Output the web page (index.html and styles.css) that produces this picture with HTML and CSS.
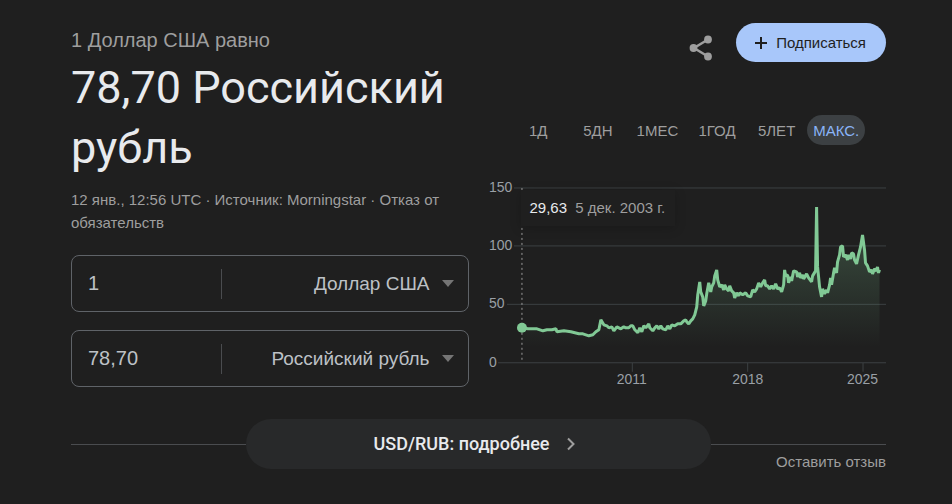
FILE: index.html
```
<!DOCTYPE html>
<html lang="ru">
<head>
  <meta charset="UTF-8" />
  <meta name="viewport" content="width=device-width,initial-scale=1" />
  <title>Курс доллара к рублю</title>
  <link rel="stylesheet" href="styles.css">
</head>
<body>
  <main class="container">
    <div class="columns">
      <section class="converter">
        <p class="from-label">1 Доллар США равно</p>
        <h1>78,70 Российский рубль</h1>
        <p class="meta">12 янв., 12:56 UTC · Источник: Morningstar · <a href="#">Отказ от обязательств</a></p>

        <div class="field">
          <input type="text" value="1" aria-label="Сумма в исходной валюте" />
          <select aria-label="Исходная валюта">
            <option>Доллар США</option>
            <option>Евро</option>
            <option>Российский рубль</option>
          </select>
          <svg class="arrow" width="12" height="7" viewBox="0 0 12 7"><path d="M0 0h12L6 7z" /></svg>
        </div>
        <div class="field">
          <input type="text" value="78,70" aria-label="Сумма в целевой валюте" />
          <select aria-label="Целевая валюта">
            <option>Российский рубль</option>
            <option>Доллар США</option>
            <option>Евро</option>
          </select>
          <svg class="arrow" width="12" height="7" viewBox="0 0 12 7"><path d="M0 0h12L6 7z" /></svg>
        </div>
      </section>

      <section class="history">
        <div class="actions">
          <button class="share-btn" aria-label="Поделиться">
            <svg width="24" height="26" viewBox="0 0 24 26">
              <path d="M19 4.500L5 13l14 8.500" fill="none" stroke="currentColor" stroke-width="2.500" />
              <circle cx="19" cy="4.500" r="3.900" />
              <circle cx="4.500" cy="13" r="3.900" />
              <circle cx="19" cy="21.500" r="3.900" />
            </svg>
          </button>
          <button class="follow-btn">
            <svg width="12" height="12" viewBox="0 0 12 12"><path d="M6 0v12M0 6h12" fill="none" stroke="currentColor" stroke-width="2" /></svg>
            Подписаться
          </button>
        </div>

        <div class="tabs">
          <button>1Д</button>
          <button>5ДН</button>
          <button>1МЕС</button>
          <button>1ГОД</button>
          <button>5ЛЕТ</button>
          <button class="active">МАКС.</button>
        </div>

        <div class="chart">
          <svg viewBox="0 0 398 210" role="img" aria-label="График курса USD/RUB">
            <defs>
              <linearGradient id="fade" x1="0" y1="0" x2="0" y2="1">
                <stop offset="0" stop-color="#81c995" stop-opacity="0.3" />
                <stop offset="0.900" stop-color="#81c995" stop-opacity="0" />
              </linearGradient>
            </defs>
            <g class="grid">
              <path d="M25 8H398M25 66H398M18 124.500H398M9 183H398" />
              <path d="M143.500 183v9M259 183v9M374.500 183v9" />
            </g>
            <g class="labels">
              <text x="0" y="12">150</text>
              <text x="0" y="70">100</text>
              <text x="0" y="128">50</text>
              <text x="0" y="187">0</text>
              <text x="143" y="204" text-anchor="middle">2011</text>
              <text x="259" y="204" text-anchor="middle">2018</text>
              <text x="374" y="204" text-anchor="middle">2025</text>
            </g>
            <path id="area" fill="url(#fade)" />
            <polyline id="line" class="line" points="33,148 39,149 48,149 54,151 58,150 63,150 67,149 68,152 75,151 82,152 90,154 94,154 100,156 104,155 107,152 110,150 112,140 115,145 118,146 120,148 123,147 125,151 128,147 132,149 135,147 137,148 140,148 142,146 144,146 146,150 149,153 151,148 153,152 155,146 157,148 160,144 161,148 164,151 166,148 168,146 170,149 172,146 174,149 177,150 179,146 181,149 183,145 186,146 189,144 192,144 195,141 197,140 198,142 200,144 202,141 204,139 206,135 208,127 209,115 211,102 212,112 214,117 215,126 217,121 218,114 220,103 222,112 223,107 225,103 226,96 228,90 229,100 231,107 233,105 235,110 236,105 238,109 240,111 241,106 243,111 245,113 246,118 248,113 250,116 251,113 254,115 257,113 259,116 262,117 264,110 266,112 268,109 270,103 272,107 274,103 276,100 277,106 279,106 281,109 283,106 285,109 287,104 289,109 291,108 293,112 295,105 296,90 297,96 299,95 300,103 302,97 303,101 305,91 308,92 309,97 311,93 312,98 314,95 315,99 318,94 320,98 323,102 324,96 327,91 328,27 329,87 331,107 333,117 334,109 336,114 338,110 339,113 341,105 342,98 343,105 345,93 346,88 348,93 349,82 351,75 352,67 354,66 355,77 357,75 359,80 360,75 362,79 363,73 365,74 366,80 368,84 370,75 372,67 374,55 376,70 377,83 379,86 381,92 383,90 384,94 386,89 388,91 389,87 390,93 391,90" />
            <path class="cursor" d="M33 8v172" />
            <circle class="dot" cx="33" cy="148" r="5" />
          </svg>
          <div class="tooltip"><b>29,63</b> 5 дек. 2003 г.</div>
        </div>
      </section>
    </div>

    <footer>
      <div class="rule"></div>
      <a class="more" href="#">
        USD/RUB: подробнее
        <svg width="8" height="14" viewBox="0 0 8 14"><path d="M1 1.500L6.500 7 1 12.500" fill="none" stroke="currentColor" stroke-width="2" /></svg>
      </a>
      <div class="rule"><a href="#">Оставить отзыв</a></div>
    </footer>
  </main>

  <script>
    // close the line down to the zero axis for the shaded area
    const points = document.getElementById("line").getAttribute("points");
    document.getElementById("area").setAttribute("d", `M33,183 L${points} L391,183 Z`);
  </script>
</body>
</html>
```
FILE: styles.css
```
body {
  margin: 0;
  font-family: "Liberation Sans", Arial, sans-serif;
  font-size: 15px;
  background: #1f1f1f;
  color: #9e9e9e;
}
button, input, select {
  font: inherit;
  color: inherit;
  border: none;
  background: none;
  padding: 0;
}
button, select {
  cursor: pointer;
}
a {
  color: inherit;
  text-decoration: none;
}
.container {
  padding: 23px 66px 0 71px;
}
.columns {
  display: grid;
  grid-template-columns: repeat(2, minmax(0, 1fr));
  gap: 20px;
}

.from-label {
  margin: 3px 0 0;
  font-size: 20px;
  line-height: 28px;
}
h1 {
  margin: 4px 0 0;
  font-family: Roboto, sans-serif;
  font-size: 45px;
  font-weight: 400;
  line-height: 60px;
  color: #e8eaed;
}
.meta {
  margin: 10px 0 21px;
  line-height: 23px;
}
.field {
  display: flex;
  align-items: center;
  box-sizing: border-box;
  height: 57px;
  margin-bottom: 18px;
  padding: 0 14px 0 16px;
  border: 1px solid #5f6368;
  border-radius: 8px;
  color: #bdc1c6;
}
.field:last-child {
  margin-bottom: 0;
}
.field input {
  flex: 9;
  min-width: 0;
  font-size: 20px;
}
.field select {
  flex: 14;
  min-width: 0;
  height: 30px;
  padding-right: 12px;
  border-left: 1px solid #4a4c4f;
  border-radius: 0;
  appearance: none;
  font-size: 19px;
  text-align-last: right;
}
.arrow {
  fill: #757575;
}

.actions {
  display: flex;
  justify-content: flex-end;
  align-items: flex-start;
  gap: 23px;
}
.share-btn {
  margin-top: 12px;
  color: #9e9e9e;
  fill: currentColor;
}
.share-btn svg {
  display: block;
}
.follow-btn {
  display: flex;
  align-items: center;
  gap: 9px;
  height: 39px;
  padding: 0 20px 0 19px;
  border-radius: 20px;
  background: #a8c7fa;
  color: #1f1f1f;
}
.tabs {
  display: grid;
  grid-template-columns: repeat(6, 1fr);
  gap: 2px;
  margin: 53px 21px 35px;
}
.tabs button {
  height: 30px;
  border-radius: 15px;
}
.tabs .active {
  background: #3c4043;
  color: #8ab4f8;
}

.chart {
  position: relative;
}
.chart svg {
  display: block;
  width: 100%;
}
.grid path {
  fill: none;
  stroke: #3c4043;
}
.labels {
  fill: #9aa0a6;
  font-size: 14px;
}
.line {
  fill: none;
  stroke: #81c995;
  stroke-width: 3;
  stroke-linejoin: bevel;
}
.cursor {
  stroke: #9e9e9e;
  stroke-dasharray: 2 3;
}
.dot {
  fill: #81c995;
}
.tooltip {
  position: absolute;
  top: 10px;
  left: 32px;
  padding: 0 10px 0 9px;
  line-height: 36px;
  background: #1f1f1f;
  box-shadow: 0 2px 12px rgba(0, 0, 0, 0.2);
}
.tooltip b {
  margin-right: 4px;
  font-weight: 400;
  color: #e8eaed;
}

footer {
  display: grid;
  grid-template-columns: 3fr 8fr 3fr;
  align-items: end;
  margin-top: 29px;
}
.rule {
  height: 24px;
  border-top: 1px solid #4a4c4f;
  line-height: 33px;
  text-align: right;
}
.more {
  display: flex;
  align-items: center;
  justify-content: center;
  gap: 18px;
  box-sizing: border-box;
  height: 50px;
  padding-right: 8px;
  border-radius: 25px;
  background: #28292a;
  font-family: Roboto, sans-serif;
  font-size: 18px;
  font-weight: 500;
  color: #e8eaed;
}
.more svg {
  color: #9e9e9e;
}
```
